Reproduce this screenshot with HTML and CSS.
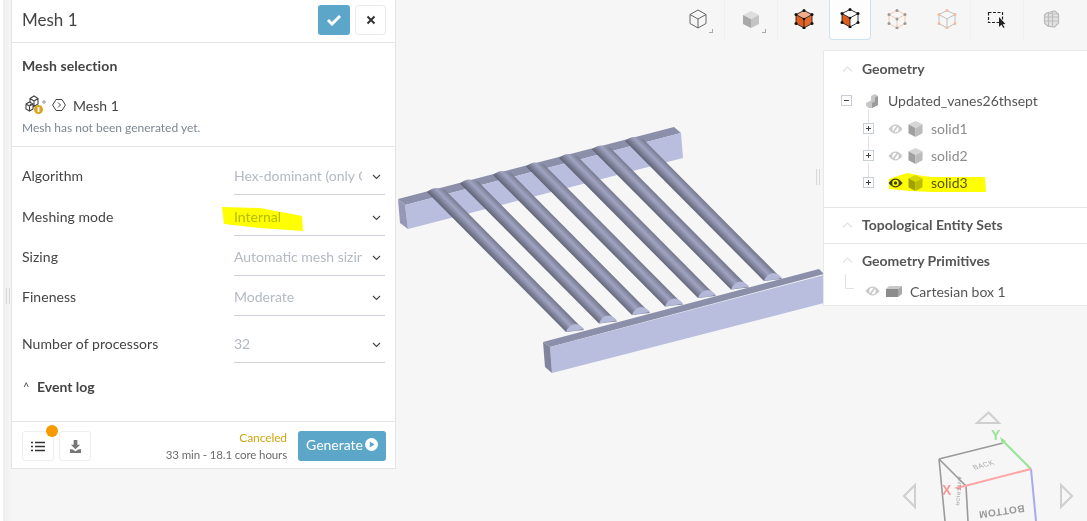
FILE: index.html
```html
<!DOCTYPE html>
<html lang="en">
<head>
<meta charset="utf-8">
<title>Mesh 1</title>
<link rel="stylesheet" href="styles.css">
</head>
<body>
<svg class="defs" width="0" height="0" aria-hidden="true">
  <defs>
    <linearGradient id="rodShade" gradientUnits="userSpaceOnUse" x1="-7" y1="5.6" x2="5.8" y2="-7">
      <stop offset="0" stop-color="#5c5f70"/>
      <stop offset=".25" stop-color="#7d8198"/>
      <stop offset=".5" stop-color="#a0a4c2"/>
      <stop offset=".78" stop-color="#7b7f95"/>
      <stop offset="1" stop-color="#5f6272"/>
    </linearGradient>
    <g id="rod">
      <path d="M-11 1 Q-6 -3 -2 -3 Q3 -2 7 -1 L146 139 L128 141 Z" fill="url(#rodShade)"/>
      <path d="M128 141 Q131 133 138 133 Q143 134 146 138 Z" fill="#b3b8d8"/>
    </g>
    <symbol id="eye" viewBox="0 0 16 12">
      <path d="M.5 6 Q8 -3.5 15.5 6 Q8 15.5 .5 6 Z" fill="currentColor"/>
      <circle cx="8" cy="6" r="3.4" fill="#fff"/>
      <circle cx="8" cy="6" r="1.8" fill="currentColor"/>
    </symbol>
    <symbol id="eyeoff" viewBox="0 0 16 12">
      <path d="M.5 6 Q8 -3.5 15.5 6 Q8 15.5 .5 6 Z" fill="#c9c9c9"/>
      <circle cx="8" cy="6" r="3.4" fill="#fff"/>
      <path d="M5.5 9.5 L10.5 2.5" stroke="#c9c9c9" stroke-width="1.8"/>
    </symbol>
    <symbol id="cube" viewBox="0 0 16 17">
      <path d="M8 0 L15.5 3.5 L8 7.5 L.5 3.5 Z" fill="#d6d6d6"/>
      <path d="M.5 3.5 L8 7.5 V17 L.5 13 Z" fill="#a0a0a0"/>
      <path d="M15.5 3.5 L8 7.5 V17 L15.5 13 Z" fill="#bcbcbc"/>
    </symbol>
  </defs>
</svg>

<main class="viewer">
  <svg class="scene" viewBox="0 0 1087 521" aria-hidden="true">
    <polygon points="398,199 674,127 681,133 405,205" fill="#8b8fa9"/>
    <polygon points="405,205 681,133 683,158 408,229" fill="#b9bedf"/>
    <polygon points="398,199 405,205 408,229 400,223" fill="#9498b4"/>
    <use href="#rod" x="438" y="191"/>
    <use href="#rod" x="471" y="182.5"/>
    <use href="#rod" x="504" y="174"/>
    <use href="#rod" x="537" y="165.5"/>
    <use href="#rod" x="570" y="157"/>
    <use href="#rod" x="603" y="148.5"/>
    <use href="#rod" x="636" y="140"/>
    <polygon points="543,342 819,269 824,274 550,347" fill="#8b8fa9"/>
    <polygon points="550,347 824,275 824,303 552,373" fill="#b9bedf"/>
    <polygon points="543,342 550,347 552,373 545,367" fill="#81859c"/>

    <g class="nav-arrows">
      <polygon points="977,423 988.5,412.5 999,423"/>
      <polygon points="915,485 904,496 915,507"/>
      <polygon points="1061,485 1072,496 1061,507"/>
    </g>
    <g class="nav-cube">
      <path d="M939 459 L1003 443 M939 459 L966 486 M966 486 L968 521 M939 459 L945 521" class="edge"/>
      <path d="M1031 469 L1036 521" class="axis-z"/>
      <path d="M1031 469 L1002 440" class="axis-y"/>
      <path d="M1031 469 L957 488" class="axis-x"/>
      <polygon points="1000,437 1006,441 1002,444" fill="#9be39b"/>
      <polygon points="954,488 961,485 961,490" fill="#ffa5a5"/>
      <text class="axis-label y" x="991" y="440">Y</text>
      <text class="axis-label x" x="942" y="495">X</text>
      <text class="cube-text" transform="translate(985 467) rotate(-15) skewX(20)">BACK</text>
      <text class="cube-text big" transform="translate(1024 505) rotate(172)">BOTTOM</text>
      <text class="cube-text small" transform="translate(957 491) rotate(95)">ANTERIOR</text>
    </g>
  </svg>

  <div class="grip grip-left"></div>
  <div class="grip grip-right"></div>

  <section class="mesh-panel">
    <header class="panel-head">
      <h1 class="panel-title">Mesh 1</h1>
      <button class="btn-ok" aria-label="Confirm">
        <svg width="16" height="12" viewBox="0 0 16 12"><path d="M2 6 L6 10 L14 2" fill="none" stroke="#fff" stroke-width="3"/></svg>
      </button>
      <button class="btn-close" aria-label="Close">
        <svg width="10" height="10" viewBox="0 0 10 10"><path d="M1.5 1.5 L8.5 8.5 M8.5 1.5 L1.5 8.5" stroke="#333" stroke-width="2"/></svg>
      </button>
    </header>

    <div class="selection">
      <h2 class="sub-title">Mesh selection</h2>
      <div class="mesh-row">
        <svg class="mesh-icon" width="24" height="20" viewBox="0 0 24 20">
          <path d="M5 3.5 L9 1 L13 3.5 V9 L9 11.5 L5 9 Z M5 3.5 L9 6 L13 3.5 M9 6 V11.5" fill="none" stroke="#444" stroke-width="1.1"/>
          <path d="M1 9 L4.5 7 L8 9 V14 L4.5 16 L1 14 Z M1 9 L4.5 11 L8 9 M4.5 11 V16" fill="#fff" stroke="#444" stroke-width="1.1"/>
          <path d="M17 7 H21 M19 5 V9" stroke="#999" stroke-width="1"/>
          <circle cx="13.5" cy="14.5" r="4.5" fill="#d9a520"/>
          <rect x="12.6" y="12" width="1.8" height="5" fill="#fff"/>
        </svg>
        <svg class="hex-icon" width="14" height="14" viewBox="0 0 14 14"><path d="M4 1.5 H10 L13.4 7 L10 12.5 H4 L.6 7 Z M6 4.5 L8.5 7 L6 9.5" fill="none" stroke="#444" stroke-width="1"/></svg>
        <span>Mesh 1</span>
      </div>
      <p class="mesh-note">Mesh has not been generated yet.</p>
    </div>

    <div class="form">
      <div class="field f40"><span class="label">Algorithm</span><div class="select"><span class="value">Hex-dominant (only Cartesian)</span><svg class="chev" width="9" height="6" viewBox="0 0 9 6"><path d="M1 1 L4.5 4.5 L8 1" fill="none" stroke="#444" stroke-width="1.1"/></svg></div></div>
      <div class="field f41"><span class="label">Meshing mode</span><div class="select"><span class="value">Internal</span><svg class="chev" width="9" height="6" viewBox="0 0 9 6"><path d="M1 1 L4.5 4.5 L8 1" fill="none" stroke="#444" stroke-width="1.1"/></svg></div></div>
      <div class="field f40"><span class="label">Sizing</span><div class="select"><span class="value">Automatic mesh sizing</span><svg class="chev" width="9" height="6" viewBox="0 0 9 6"><path d="M1 1 L4.5 4.5 L8 1" fill="none" stroke="#444" stroke-width="1.1"/></svg></div></div>
      <div class="field f40"><span class="label">Fineness</span><div class="select"><span class="value">Moderate</span><svg class="chev" width="9" height="6" viewBox="0 0 9 6"><path d="M1 1 L4.5 4.5 L8 1" fill="none" stroke="#444" stroke-width="1.1"/></svg></div></div>
      <div class="field f47"><span class="label">Number of processors</span><div class="select"><span class="value">32</span><svg class="chev" width="9" height="6" viewBox="0 0 9 6"><path d="M1 1 L4.5 4.5 L8 1" fill="none" stroke="#444" stroke-width="1.1"/></svg></div></div>
      <div class="event-log"><span class="caret">^</span><span>Event log</span></div>
    </div>

    <footer class="panel-foot">
      <button class="btn-square list" aria-label="List">
        <svg width="14" height="11" viewBox="0 0 14 11"><path d="M0 1.5 H2 M4 1.5 H14 M0 5.5 H2 M4 5.5 H14 M0 9.5 H2 M4 9.5 H14" stroke="#333" stroke-width="1.6"/></svg>
        <span class="badge"></span>
      </button>
      <button class="btn-square" aria-label="Download">
        <svg width="13" height="13" viewBox="0 0 14 14"><path d="M5 0 H9 V5 H12 L7 10 L2 5 H5 Z M1 10 H3.5 L7 12 L10.5 10 H13 V14 H1 Z" fill="#777"/></svg>
      </button>
      <div class="status">
        <span class="state">Canceled</span>
        <span class="eta">33 min - 18.1 core hours</span>
      </div>
      <button class="btn-generate">Generate
        <svg width="13" height="13" viewBox="0 0 13 13"><circle cx="6.5" cy="6.5" r="6.5" fill="#fff"/><path d="M4.8 3.4 L9.6 6.5 L4.8 9.6 Z" fill="#5ba6c9"/></svg>
      </button>
    </footer>
  </section>

  <nav class="toolbar">
    <button class="tool w53">
      <svg width="20" height="20" viewBox="-10 -10 20 20"><g fill="none" stroke="#555" stroke-width=".9"><path d="M0 -9 L8 -4.5 V4.5 L0 9 L-8 4.5 V-4.5 Z M-8 -4.5 L0 0 L8 -4.5 M0 0 V9"/></g></svg>
      <span class="corner"></span>
    </button>
    <button class="tool w53 sep">
      <svg width="20" height="20" viewBox="-10 -10 20 20"><path d="M0 -8 L8 -4 L0 0 L-8 -4 Z" fill="#dedede"/><path d="M-8 -4 L0 0 V9 L-8 5 Z" fill="#a9a9a9"/><path d="M8 -4 L0 0 V9 L8 5 Z" fill="#c4c4c4"/></svg>
      <span class="corner"></span>
    </button>
    <button class="tool w52 sep">
      <svg width="20" height="20" viewBox="-10 -10 20 20"><path d="M0 -8.5 L8 -4.5 L0 0 L-8 -4.5 Z" fill="#f3ad8b"/><path d="M-8 -4.5 L0 0 V9 L-8 4.5 Z" fill="#dd5e1e"/><path d="M8 -4.5 L0 0 V9 L8 4.5 Z" fill="#e46a2c"/><path d="M0 -8.5 L8 -4.5 V4.5 L0 9 L-8 4.5 V-4.5 Z M-8 -4.5 L0 0 L8 -4.5 M0 0 V9" fill="none" stroke="#222" stroke-width=".9"/><g fill="#111"><circle cx="0" cy="-8.5" r="1.5"/><circle cx="8" cy="-4.5" r="1.5"/><circle cx="8" cy="4.5" r="1.5"/><circle cx="0" cy="9" r="1.5"/><circle cx="-8" cy="4.5" r="1.5"/><circle cx="-8" cy="-4.5" r="1.5"/><circle cx="0" cy="0" r="1.3"/></g></svg>
    </button>
    <button class="tool w42 active">
      <svg width="20" height="20" viewBox="-10 -10 20 20"><path d="M-8 -4.5 L0 0 V9 L-8 4.5 Z" fill="#dd5e1e"/><path d="M0 -8.5 L8 -4.5 V4.5 L0 9 L-8 4.5 V-4.5 Z M-8 -4.5 L0 0 L8 -4.5 M0 0 V9" fill="none" stroke="#222" stroke-width=".9"/><g fill="#111"><circle cx="0" cy="-8.5" r="1.5"/><circle cx="8" cy="-4.5" r="1.5"/><circle cx="8" cy="4.5" r="1.5"/><circle cx="0" cy="9" r="1.5"/><circle cx="-8" cy="4.5" r="1.5"/><circle cx="-8" cy="-4.5" r="1.5"/><circle cx="0" cy="0" r="1.3"/></g></svg>
    </button>
    <button class="tool w52">
      <svg width="20" height="20" viewBox="-10 -10 20 20"><path d="M0 -8.5 L8 -4.5 V4.5 L0 9 L-8 4.5 V-4.5 Z M0 0 V9 M-8 -4.5 L0 0 L8 -4.5" fill="none" stroke="#f3c4ab" stroke-width=".9"/><g fill="#9a9a9a"><circle cx="0" cy="-8.5" r="1.5"/><circle cx="8" cy="-4.5" r="1.5"/><circle cx="8" cy="4.5" r="1.5"/><circle cx="0" cy="9" r="1.5"/><circle cx="-8" cy="4.5" r="1.5"/><circle cx="-8" cy="-4.5" r="1.5"/><circle cx="0" cy="0" r="1.5"/></g></svg>
    </button>
    <button class="tool w47">
      <svg width="20" height="20" viewBox="-10 -10 20 20"><path d="M0 -8.5 L8 -4.5 V4.5 L0 9 L-8 4.5 V-4.5 Z M0 0 V9 M-8 -4.5 L0 0 L8 -4.5" fill="none" stroke="#b9b9b9" stroke-width=".9"/><g fill="#f3bda2"><circle cx="0" cy="-8.5" r="1.5"/><circle cx="8" cy="-4.5" r="1.5"/><circle cx="8" cy="4.5" r="1.5"/><circle cx="0" cy="9" r="1.5"/><circle cx="-8" cy="4.5" r="1.5"/><circle cx="-8" cy="-4.5" r="1.5"/></g></svg>
    </button>
    <button class="tool w53 sep">
      <svg width="20" height="20" viewBox="0 0 20 20"><rect x="1.5" y="3.5" width="14" height="10" fill="none" stroke="#222" stroke-width="1.2" stroke-dasharray="3 1.5"/><path d="M12 8 L12 18 L14.4 15.8 L16.4 19 L17.6 18.2 L15.6 15.2 L18.4 15 Z" fill="#222"/></svg>
    </button>
    <button class="tool w56 sep">
      <svg width="17" height="18" viewBox="-8 -9 16 18"><path d="M-5 -6 L3 -8 L7 -5 V4 L3 8 L-4 7 L-7 4 V-4 Z M-3 -7 V8 M1 -8 V8 M-7 -2 L7 -2 M-7 2 L7 2 M-5 -6 L7 -5" fill="#e2e2e2" stroke="#bcbcbc" stroke-width="1.2"/></svg>
    </button>
  </nav>

  <aside class="tree-panel">
    <section class="tree-sec geometry">
      <h3 class="sec-head"><svg class="sec-chev" width="11" height="6" viewBox="0 0 11 6"><path d="M1 5.5 L5.5 1 L10 5.5" fill="none" stroke="#e2e2e2" stroke-width="1.2"/></svg>Geometry</h3>
      <div class="tree-root">
        <span class="exp root"><i class="dash"></i></span>
        <svg class="root-icon" width="12" height="14" viewBox="0 0 12 14"><path d="M0 9 L5 6.5 V2 L9 0 L12 2 V11 L6 14 L3 14 L0 12 Z" fill="#c6c6c6"/><path d="M9 3.5 L12 2 V11 L6 14 V9 L9 7.5 Z" fill="#9b9b9b"/></svg>
        <span>Updated_vanes26thsept</span>
      </div>
      <div class="tree-item muted">
        <span class="exp"><i class="dash"></i><i class="bar"></i></span>
        <svg class="eye" width="15" height="12"><use href="#eyeoff"/></svg>
        <svg class="cube" width="15" height="16"><use href="#cube"/></svg>
        <span>solid1</span>
      </div>
      <div class="tree-item muted">
        <span class="exp"><i class="dash"></i><i class="bar"></i></span>
        <svg class="eye" width="15" height="12"><use href="#eyeoff"/></svg>
        <svg class="cube" width="15" height="16"><use href="#cube"/></svg>
        <span>solid2</span>
      </div>
      <div class="tree-item">
        <span class="exp"><i class="dash"></i><i class="bar"></i></span>
        <svg class="eye on" width="15" height="12"><use href="#eye"/></svg>
        <svg class="cube" width="15" height="16"><use href="#cube"/></svg>
        <span>solid3</span>
      </div>
    </section>
    <section class="tree-sec topo">
      <h3 class="sec-head"><svg class="sec-chev" width="11" height="6" viewBox="0 0 11 6"><path d="M1 5.5 L5.5 1 L10 5.5" fill="none" stroke="#e2e2e2" stroke-width="1.2"/></svg>Topological Entity Sets</h3>
    </section>
    <section class="tree-sec prim">
      <h3 class="sec-head"><svg class="sec-chev" width="11" height="6" viewBox="0 0 11 6"><path d="M1 5.5 L5.5 1 L10 5.5" fill="none" stroke="#e2e2e2" stroke-width="1.2"/></svg>Geometry Primitives</h3>
      <div class="prim-item">
        <span class="elbow"></span>
        <svg class="eye" width="15" height="12"><use href="#eyeoff"/></svg>
        <svg class="box-icon" width="16" height="11" viewBox="0 0 16 11"><path d="M0 3 H12 V11 H0 Z" fill="#8c8c8c"/><path d="M0 3 L3 0 H16 L12 3 Z" fill="#c9c9c9"/><path d="M12 3 L16 0 V8 L12 11 Z" fill="#a9a9a9"/></svg>
        <span>Cartesian box 1</span>
      </div>
    </section>
  </aside>

  <svg class="marker" viewBox="0 0 1087 521" aria-hidden="true">
    <polygon points="222,207 260,208 302,216 303,231 260,228 224,224"/>
    <polygon points="889,179 907,173 923,176 932,177 985,177 986,192 932,192 910,191 889,189"/>
  </svg>
</main>
</body>
</html>
```
FILE: styles.css
```css
* { box-sizing: border-box; }
html, body { margin: 0; height: 100%; overflow: hidden; }
body {
  background: #fff;
  font-family: Lato, "Open Sans", sans-serif;
  font-size: 14px;
  color: #444;
}
.defs { position: absolute; }
button { font-family: inherit; padding: 0; cursor: pointer; }
h1, h2, h3, p { margin: 0; }

.viewer {
  position: relative;
  width: 1087px;
  height: 521px;
  margin-left: 3px;
  overflow: hidden;
  background: linear-gradient(90deg, #eeeeee 0, #f6f6f6 9px);
}
.scene, .marker {
  position: absolute;
  left: -3px;
  top: 0;
  width: 1087px;
  height: 521px;
}
.marker { pointer-events: none; mix-blend-mode: multiply; }
.marker polygon { fill: #ffff00; }

.nav-arrows polygon { fill: none; stroke: #cfcfcf; stroke-width: 2; }
.edge { fill: none; stroke: #9a9a9a; stroke-width: 1.6; }
.axis-z { fill: none; stroke: #a9a9f2; stroke-width: 2; }
.axis-y { fill: none; stroke: #9be39b; stroke-width: 2; }
.axis-x { fill: none; stroke: #ffa5a5; stroke-width: 2; }
.axis-label { font-family: "Liberation Sans", sans-serif; font-size: 14px; font-weight: 700; }
.axis-label.y { fill: #9be39b; }
.axis-label.x { fill: #f79a9a; }
.cube-text { font-family: "Liberation Sans", sans-serif; font-size: 7px; fill: #aaa; text-anchor: middle; letter-spacing: .5px; }
.cube-text.big { font-size: 10px; fill: #999; text-anchor: start; font-weight: 700; }
.cube-text.small { font-size: 5px; fill: #999; }

.grip { position: absolute; width: 4px; height: 16px; border-left: 1px solid #d8d8d8; border-right: 1px solid #d8d8d8; }
.grip-left { left: 3px; top: 288px; }
.grip-right { left: 813px; top: 169px; }

/* Left panel */
.mesh-panel {
  position: absolute;
  left: 8px;
  top: 0;
  width: 385px;
  height: 469px;
  display: flex;
  flex-direction: column;
  background: #fff;
  border: 1px solid #e4e4e4;
  border-top: 0;
}
.panel-head {
  display: flex;
  align-items: center;
  gap: 5px;
  height: 43px;
  padding: 0 9px 3px 10px;
  border-bottom: 1px solid #e4e4e4;
}
.panel-title { flex: 1; font-size: 17px; font-weight: 400; color: #444; }
.btn-ok {
  display: flex; align-items: center; justify-content: center;
  width: 32px; height: 30px; border: 0; border-radius: 3px; background: #5ba6c9;
}
.btn-close {
  display: flex; align-items: center; justify-content: center;
  width: 31px; height: 30px; background: #fff; border: 1px solid #eaeaea; border-radius: 3px;
}
.selection {
  padding: 13px 10px 10px;
  border-bottom: 1px solid #e4e4e4;
}
.sub-title { font-size: 14px; font-weight: 700; line-height: 20px; color: #444; letter-spacing: .1px; }
.mesh-row { display: flex; align-items: center; height: 20px; margin-top: 19px; }
.mesh-row span { margin-left: 7px; }
.mesh-icon { margin-left: 3px; }
.hex-icon { margin-left: 3px; }
.mesh-note { margin-top: 5px; font-size: 12px; line-height: 16px; color: #7d8791; }

.form { padding: 8px 10px 0; }
.field { display: flex; align-items: flex-end; }
.f40 { height: 40px; }
.f41 { height: 41px; }
.f47 { height: 47px; }
.label { width: 212px; height: 35px; line-height: 32px; letter-spacing: .05px; }
.select {
  flex: 1;
  display: flex;
  align-items: center;
  justify-content: space-between;
  height: 35px;
  padding-right: 4px;
  border-bottom: 1px solid #cfd2d8;
}
.value { width: 128px; padding-bottom: 4px; overflow: hidden; white-space: nowrap; color: #b4bac2; }
.event-log { display: flex; align-items: center; height: 20px; margin-top: 13px; font-weight: 700; }
.caret { width: 14px; font-weight: 400; font-size: 11px; margin-left: 1px; }

.panel-foot {
  display: flex;
  align-items: flex-start;
  gap: 5px;
  margin-top: auto;
  height: 47px;
  padding: 9px 9px 0 10px;
  border-top: 1px solid #e4e4e4;
}
.btn-square {
  position: relative;
  display: flex; align-items: center; justify-content: center;
  width: 32px; height: 30px; background: #fff; border: 1px solid #eee; border-radius: 3px;
}
.badge {
  position: absolute; right: -5px; top: -7px;
  width: 12px; height: 12px; border-radius: 50%; background: #f59b00;
}
.status {
  flex: 1;
  display: flex; flex-direction: column; align-items: flex-end;
  margin-right: 6px;
  font-size: 12px;
}
.state { line-height: 14px; color: #d3a50f; letter-spacing: -.1px; }
.eta { margin-top: 2px; line-height: 16px; font-size: 11.5px; letter-spacing: -.12px; color: #6c6c6c; }
.btn-generate {
  display: flex; align-items: center; justify-content: center; gap: 2px;
  width: 88px; height: 30px; padding-bottom: 3px; border: 0; border-radius: 3px;
  background: #5ba6c9; color: #fff; font-size: 14px;
}

/* Toolbar */
.toolbar {
  position: absolute;
  left: 668px;
  top: 0;
  display: flex;
  height: 40px;
}
.tool {
  position: relative;
  display: flex; align-items: center; justify-content: center;
  height: 40px; padding-bottom: 3px;
  background: transparent; border: 0;
}
.w42 { width: 42px; }
.w47 { width: 47px; }
.w52 { width: 52px; }
.w53 { width: 53px; }
.w56 { width: 56px; }
.sep { border-left: 1px solid #f0f0f0; }
.active {
  background: #fdfdfd;
  border: 1px solid #cfe3ee;
  border-top: 0;
  border-radius: 0 0 4px 4px;
}
.corner {
  position: absolute; right: 11px; bottom: 7px;
  width: 4px; height: 4px;
  border-right: 1px solid #aaa; border-bottom: 1px solid #aaa;
}

/* Tree panel */
.tree-panel {
  position: absolute;
  left: 820px;
  top: 50px;
  width: 267px;
  height: 256px;
  background: #fff;
  border: 1px solid #e8e8e8;
  border-right: 0;
  color: #555;
}
.tree-sec + .tree-sec { border-top: 1px solid #e6e6e6; }
.geometry { height: 156px; }
.topo { height: 36px; }
.sec-head {
  display: flex; align-items: center;
  height: 35px;
  padding-left: 18px;
  font-size: 14px; font-weight: 700; color: #555;
}
.topo .sec-head { height: 33px; }
.prim .sec-head { height: 32px; margin-bottom: 2px; }
.sec-chev { margin-right: 9px; }
.tree-root { display: flex; align-items: center; height: 29px; padding-left: 17px; }
.tree-item { position: relative; display: flex; align-items: center; height: 27px; padding-left: 39px; }
.muted { color: #8c8c8c; }
.exp { position: relative; display: block; width: 11px; height: 11px; background: #fff; border: 1px solid #c8ced6; flex: none; }
.dash { position: absolute; left: 2px; top: 4px; width: 5px; height: 1px; background: #444; }
.bar { position: absolute; left: 4px; top: 2px; width: 1px; height: 5px; background: #444; }
.root-icon { margin: 0 10px 0 14px; }
.eye { color: #555; margin-left: 14px; }
.eye.on { color: #444; }
.cube { margin: 0 8px 0 5px; }
.tree-item::before {
  content: ""; position: absolute; left: 44px; top: -6px; bottom: 8px;
  width: 1px; background: #e2e2e2;
}
.tree-item .exp { z-index: 1; }
.prim-item { position: relative; display: flex; align-items: center; height: 26px; padding-left: 28px; }
.prim-item .eye { margin-left: 13px; }
.box-icon { margin: 0 8px 0 6px; }
.elbow {
  position: absolute; left: 21px; top: -4px; width: 9px; height: 15px;
  border-left: 1px solid #e2e2e2; border-bottom: 1px solid #e2e2e2;
}
```
